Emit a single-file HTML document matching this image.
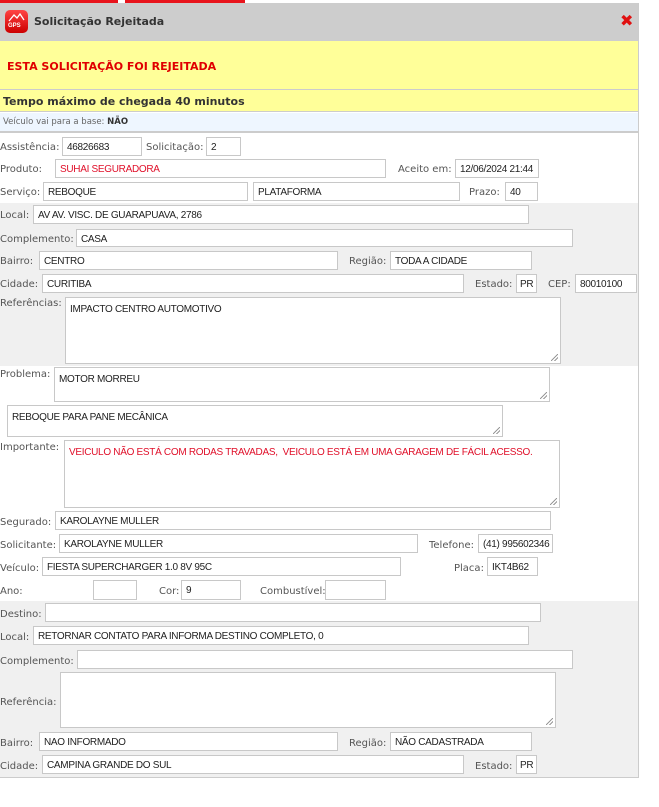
<!DOCTYPE html>
<html><head><meta charset="utf-8"><style>
*{margin:0;padding:0;box-sizing:border-box}
body{width:659px;height:807px;background:#fff;position:relative;overflow:hidden;font-family:"DejaVu Sans","Liberation Sans",sans-serif;font-size:10px;color:#555}
.a{position:absolute;white-space:nowrap}
.l{position:absolute;white-space:nowrap;font-size:10px;color:#555;line-height:12px;margin-top:2px}
.i{position:absolute;background:#fff;border:1px solid #c8c8c8;font-family:"Liberation Sans",sans-serif;font-size:10px;color:#222;padding:4px 4px 2px;white-space:nowrap;overflow:hidden;line-height:11px;letter-spacing:-0.3px}
.t{padding-top:6px}
.t:after{content:"";position:absolute;right:2px;bottom:2px;width:7px;height:7px;background:linear-gradient(135deg,transparent 45%,#999 45%,#999 55%,transparent 55%,transparent 70%,#999 70%,#999 80%,transparent 80%)}
.r{color:#e0102a}
</style></head><body>
<div class="a" style="left:0;top:0;width:118px;height:3px;background:#e8141c"></div>
<div class="a" style="left:125px;top:0;width:120px;height:3px;background:#e8141c"></div>
<div class="a" style="left:0;top:3px;width:639px;height:775px;border-right:1px solid #ccc;border-bottom:1px solid #ccc"></div>
<div class="a" style="left:0;top:3px;width:638px;height:38px;background:#cdcdcd"></div>
<div class="a" style="left:5px;top:10px;width:23px;height:23px;border-radius:5px;background:linear-gradient(#f44,#c00);"><span style="position:absolute;left:3px;top:13px;font-size:6px;color:#fff;font-weight:bold;font-family:'Liberation Sans'">GPS</span><svg style="position:absolute;left:3px;top:2px" width="17" height="11"><path d="M1 9 L6 3 L9 6 L12 2 L16 8" stroke="#fff" stroke-width="1.3" fill="none"/></svg></div>
<div class="a" style="left:34px;top:15px;font-weight:bold;font-size:11px;color:#333">Solicitação Rejeitada</div>
<div class="a" style="left:620px;top:13px;font-size:16px;font-weight:bold;color:#e01010;line-height:16px">✖</div>
<div class="a" style="left:0;top:41px;width:638px;height:49px;background:#ffff99;border-bottom:1px solid #ccc"></div>
<div class="a" style="left:7px;top:60px;font-weight:bold;font-size:11px;color:#e00000">ESTA SOLICITAÇÃO FOI REJEITADA</div>
<div class="a" style="left:0;top:90px;width:638px;height:22px;background:#ffff99;border-bottom:1px solid #ccc"></div>
<div class="a" style="left:3px;top:95px;font-weight:bold;font-size:11px;color:#333">Tempo máximo de chegada 40 minutos</div>
<div class="a" style="left:0;top:113px;width:638px;height:20px;background:#eef6ff;border-bottom:2px solid #ccc"></div>
<div class="a" style="left:3px;top:117px;font-size:8.5px;color:#666">Veículo vai para a base: <b style="color:#333">NÃO</b></div>
<div class="a" style="left:0;top:203px;width:638px;height:163px;background:#f0f0f0"></div>
<div class="a" style="left:0;top:601px;width:638px;height:176px;background:#f0f0f0"></div>

<div class="l" style="left:0;top:140px">Assistência:</div><div class="i" style="left:62px;top:137px;width:80px;height:19px">46826683</div>
<div class="l" style="left:146px;top:140px">Solicitação:</div><div class="i" style="left:206px;top:137px;width:35px;height:19px">2</div>
<div class="l" style="left:0;top:162px">Produto:</div><div class="i r" style="left:55px;top:159px;width:331px;height:19px">SUHAI SEGURADORA</div>
<div class="l" style="left:398px;top:162px">Aceito em:</div><div class="i" style="left:455px;top:159px;width:84px;height:19px">12/06/2024 21:44</div>
<div class="l" style="left:0;top:185px">Serviço:</div><div class="i" style="left:43px;top:182px;width:205px;height:19px">REBOQUE</div>
<div class="i" style="left:253px;top:182px;width:207px;height:19px">PLATAFORMA</div>
<div class="l" style="left:469px;top:185px">Prazo:</div><div class="i" style="left:505px;top:182px;width:33px;height:19px">40</div>

<div class="l" style="left:0;top:208px">Local:</div><div class="i" style="left:33px;top:205px;width:496px;height:19px">AV AV. VISC. DE GUARAPUAVA, 2786</div>
<div class="l" style="left:0;top:232px">Complemento:</div><div class="i" style="left:76px;top:229px;width:497px;height:18px">CASA</div>
<div class="l" style="left:0;top:254px">Bairro:</div><div class="i" style="left:39px;top:251px;width:299px;height:19px">CENTRO</div>
<div class="l" style="left:349px;top:254px">Região:</div><div class="i" style="left:390px;top:251px;width:142px;height:19px">TODA A CIDADE</div>
<div class="l" style="left:0;top:277px">Cidade:</div><div class="i" style="left:42px;top:274px;width:422px;height:19px">CURITIBA</div>
<div class="l" style="left:475px;top:277px">Estado:</div><div class="i" style="left:516px;top:274px;width:21px;height:19px;padding-left:3px">PR</div>
<div class="l" style="left:548px;top:277px">CEP:</div><div class="i" style="left:575px;top:274px;width:62px;height:19px">80010100</div>
<div class="l" style="left:0;top:296px">Referências:</div><div class="i t" style="left:65px;top:297px;width:496px;height:67px">IMPACTO CENTRO AUTOMOTIVO</div>

<div class="l" style="left:0;top:367px">Problema:</div><div class="i t" style="left:54px;top:367px;width:496px;height:35px">MOTOR MORREU</div>
<div class="i t" style="left:7px;top:405px;width:496px;height:32px">REBOQUE PARA PANE MECÂNICA</div>
<div class="l" style="left:0;top:440px">Importante:</div><div class="i t r" style="left:64px;top:440px;width:496px;height:68px">VEICULO NÃO ESTÁ COM RODAS TRAVADAS,&nbsp; VEICULO ESTÁ EM UMA GARAGEM DE FÁCIL ACESSO.</div>

<div class="l" style="left:0;top:515px">Segurado:</div><div class="i" style="left:55px;top:511px;width:496px;height:19px">KAROLAYNE MULLER</div>
<div class="l" style="left:0;top:538px">Solicitante:</div><div class="i" style="left:59px;top:534px;width:359px;height:19px">KAROLAYNE MULLER</div>
<div class="l" style="left:429px;top:538px">Telefone:</div><div class="i" style="left:478px;top:534px;width:75px;height:19px">(41) 995602346</div>
<div class="l" style="left:0;top:561px">Veículo:</div><div class="i" style="left:42px;top:557px;width:359px;height:19px">FIESTA SUPERCHARGER 1.0 8V 95C</div>
<div class="l" style="left:454px;top:561px">Placa:</div><div class="i" style="left:487px;top:557px;width:51px;height:19px">IKT4B62</div>
<div class="l" style="left:0;top:584px">Ano:</div><div class="i" style="left:93px;top:580px;width:44px;height:20px"></div>
<div class="l" style="left:159px;top:584px">Cor:</div><div class="i" style="left:181px;top:580px;width:60px;height:20px">9</div>
<div class="l" style="left:260px;top:584px">Combustível:</div><div class="i" style="left:325px;top:580px;width:61px;height:20px"></div>

<div class="l" style="left:0;top:607px">Destino:</div><div class="i" style="left:45px;top:603px;width:496px;height:19px"></div>
<div class="l" style="left:0;top:630px">Local:</div><div class="i" style="left:33px;top:626px;width:496px;height:19px">RETORNAR CONTATO PARA INFORMA DESTINO COMPLETO, 0</div>
<div class="l" style="left:0;top:654px">Complemento:</div><div class="i" style="left:77px;top:650px;width:496px;height:19px"></div>
<div class="l" style="left:0;top:695px">Referência:</div><div class="i t" style="left:60px;top:672px;width:496px;height:56px"></div>
<div class="l" style="left:0;top:736px">Bairro:</div><div class="i" style="left:39px;top:732px;width:299px;height:19px">NAO INFORMADO</div>
<div class="l" style="left:349px;top:736px">Região:</div><div class="i" style="left:390px;top:732px;width:142px;height:19px">NÃO CADASTRADA</div>
<div class="l" style="left:0;top:759px">Cidade:</div><div class="i" style="left:42px;top:755px;width:422px;height:19px">CAMPINA GRANDE DO SUL</div>
<div class="l" style="left:475px;top:759px">Estado:</div><div class="i" style="left:516px;top:755px;width:21px;height:19px;padding-left:3px">PR</div>
</body></html>
